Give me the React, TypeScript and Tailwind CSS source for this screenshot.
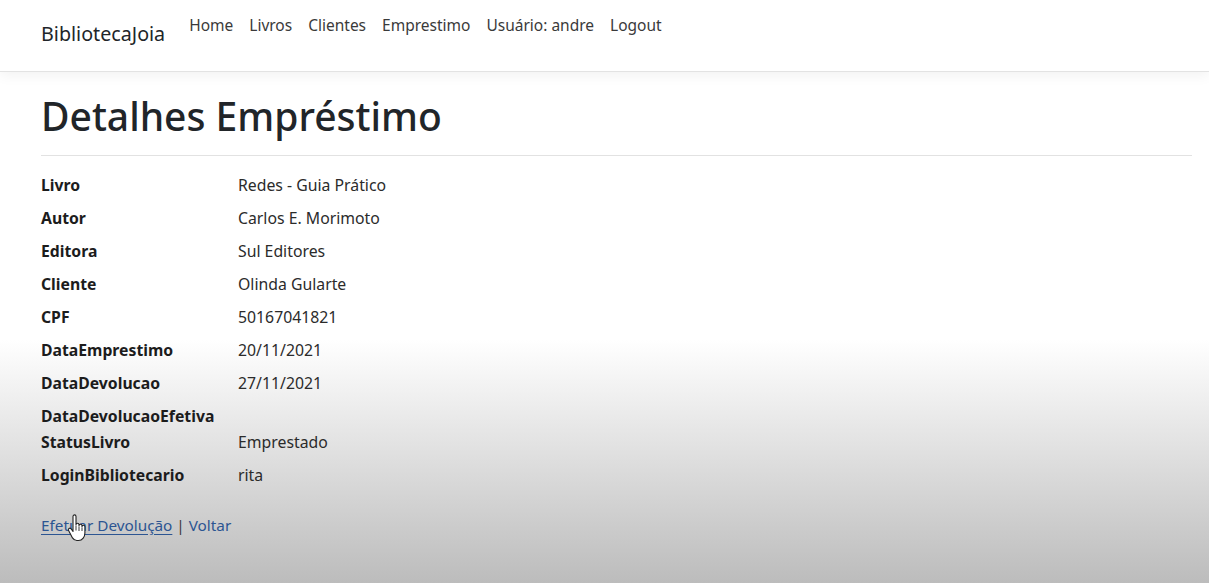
import React from "react";

const rows: [string, string][] = [
  ["Livro", "Redes - Guia Prático"],
  ["Autor", "Carlos E. Morimoto"],
  ["Editora", "Sul Editores"],
  ["Cliente", "Olinda Gularte"],
  ["CPF", "50167041821"],
  ["DataEmprestimo", "20/11/2021"],
  ["DataDevolucao", "27/11/2021"],
  ["DataDevolucaoEfetiva", ""],
  ["StatusLivro", "Emprestado"],
  ["LoginBibliotecario", "rita"],
];

const navItems = ["Home", "Livros", "Clientes", "Emprestimo", "Usuário: andre", "Logout"];

function HandCursor() {
  return (
    <svg
      className="absolute left-[66px] top-[514px]"
      width="22"
      height="28"
      viewBox="0 0 22 28"
    >
      <path
        d="M7 2.5c0-1 .7-1.6 1.5-1.6S10 1.5 10 2.5v8.2c0-.9.7-1.5 1.5-1.5s1.5.6 1.5 1.5v1c0-.9.7-1.5 1.5-1.5s1.5.6 1.5 1.5v1c0-.9.7-1.4 1.4-1.4.8 0 1.5.6 1.5 1.4v6.3c0 3.6-2.4 7.5-6.4 7.5H10.8c-2 0-3.3-1-4.3-2.6L2.6 16.6c-.5-.8-.3-1.8.5-2.2.7-.4 1.6-.1 2.1.6L7 17.5z"
        fill="#ffffff"
        stroke="#222222"
        strokeWidth="1.1"
        strokeLinejoin="round"
      />
      <path d="M10 11.5v5M13 12.5v4.5M16 13.5v3.5" stroke="#222" strokeWidth="0.9" />
    </svg>
  );
}

export default function App() {
  return (
    <div
      className="relative min-h-[583px] w-full bg-[linear-gradient(to_bottom,#ffffff_0px,#ffffff_340px,#bcbcbc_583px)] text-[#212529]"
      style={{ fontFamily: '"Noto Sans", "Open Sans", sans-serif' }}
    >
      <nav className="flex h-[72px] items-start border-b border-[#e3e3e3] bg-white px-[41px] shadow-[0_4px_12px_rgba(0,0,0,0.05)]">
        <a className="mt-[22px] text-[19.7px] leading-[24px] text-[#212529]">BibliotecaJoia</a>
        <ul className="ml-[16px] mt-[13px] flex">
          {navItems.map((n) => (
            <li key={n} className="px-[8px] text-[15.5px] leading-[24px] text-[#3a3a3a]">
              {n}
            </li>
          ))}
        </ul>
      </nav>
      <main className="pl-[41px] pr-[17px] pt-[19px]">
        <h1 className="text-[39px] font-medium leading-[50px] text-[#212529]">Detalhes Empréstimo</h1>
        <hr className="mt-[14px] border-t border-[#e2e2e2]" />
        <dl className="mb-[17px] mt-[17px]">
          {rows.map(([k, v]) => (
            <div key={k} className={v === "" ? "flex min-h-[26px]" : "flex"}>
              <dt className="w-[197px] shrink-0 text-[15.75px] font-bold leading-[25px] text-[#1c1c1c]">{k}</dt>
              <dd className="mb-[8px] text-[15.8px] leading-[25px] text-[#2b2b2b]">{v}</dd>
            </div>
          ))}
        </dl>
        <div className="text-[15.3px] leading-[25px]">
          <a className="text-[#2c5592] underline underline-offset-[3px]">Efetuar Devolução</a>
          <span className="text-[#3a3a3a]"> | </span>
          <a className="text-[#2c5592]">Voltar</a>
        </div>
      </main>
      <HandCursor />
    </div>
  );
}
